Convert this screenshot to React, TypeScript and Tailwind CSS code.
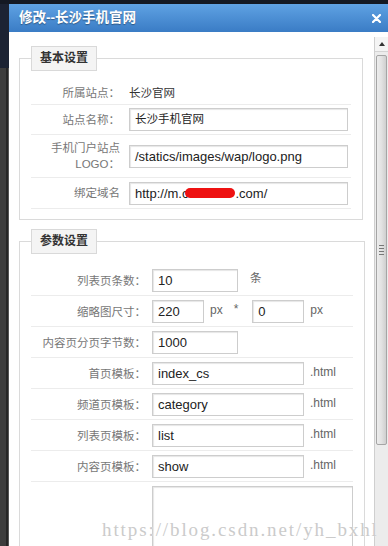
import React from "react";

const font = "font-['Liberation_Sans','Noto_Sans_CJK_SC',sans-serif]";

function Box({ w, children }: { w: string; children?: React.ReactNode }) {
  return (
    <div
      className={`${w} h-[23px] shrink-0 border border-[#cdcdcd] bg-white shadow-[inset_1px_1px_1px_#e6e6e6] pl-[5px] flex items-center text-[13px] text-[#222] leading-none overflow-hidden whitespace-nowrap`}
    >
      {children}
    </div>
  );
}

function Legend({ text }: { text: string }) {
  return (
    <legend className="ml-0 h-[25px] px-[8px] border border-[#d9d9d9] bg-[#f4f4f4] text-[12px] font-bold text-[#333] leading-[23px]">
      {text}
    </legend>
  );
}

function Row2({ label, children }: { label: string; children: React.ReactNode }) {
  return (
    <div className="flex items-center h-[31px] pt-[1px] border-b border-[#ececec]">
      <div className="w-[115px] shrink-0 text-right text-[11.5px] text-[#777] leading-[16px]">{label}</div>
      <div className="ml-[6px] flex items-center">{children}</div>
    </div>
  );
}

function Suffix({ text, cls }: { text: string; cls: string }) {
  return <span className={`${cls} text-[12px] text-[#666] leading-none -mt-[3px]`}>{text}</span>;
}

export default function App() {
  return (
    <div className={`w-[388px] h-[546px] overflow-hidden flex flex-col bg-[#141923] ${font}`}>
      <div className="h-[4px] shrink-0 bg-[#141923]" />
      <div className="flex flex-1 min-h-0">
        {/* left backdrop strip */}
        <div className="w-[9px] shrink-0 flex flex-col">
          <div className="h-[64px] bg-[#1c2333]" />
          <div className="flex-1 flex">
            <div className="w-[6px] bg-[#3d3d3d]" />
            <div className="w-[2px] bg-[#262626]" />
            <div className="w-[1px] bg-[#555]" />
          </div>
        </div>
        {/* dialog */}
        <div className="flex-1 flex flex-col bg-white min-w-0">
          <div className="h-[28px] shrink-0 bg-gradient-to-b from-[#5fa2e3] to-[#3a7cc5] flex items-center justify-between pl-[10px] pr-[7px]">
            <span className="text-white font-bold text-[13.5px] [text-shadow:0_1px_1px_rgba(0,0,0,0.35)]">修改--长沙手机官网</span>
            <svg width="9" height="9" viewBox="0 0 9 9">
              <path d="M1 1L8 8M8 1L1 8" stroke="white" strokeWidth="2.2" strokeLinecap="round" />
            </svg>
          </div>
          <div className="flex flex-1 min-h-0">
            <div className="flex-1 min-w-0 pl-[10px] pr-[11px] pt-[14px] relative">
              {/* 基本设置 */}
              <fieldset className="border border-[#dadada] px-[11px] pt-[4px] pb-[10px]">
                <Legend text="基本设置" />
                <div className="flex items-center h-[30px] pt-[6px] border-b border-[#ececec]">
                  <div className="w-[89px] shrink-0 text-right text-[11.5px] text-[#777] leading-[16px]">所属站点：</div>
                  <div className="ml-[9px] text-[11.5px] text-[#333] leading-[16px]">长沙官网</div>
                </div>
                <div className="flex items-center h-[30px] border-b border-[#ececec]">
                  <div className="w-[89px] shrink-0 text-right text-[11.5px] text-[#777] leading-[16px]">站点名称：</div>
                  <div className="ml-[9px]">
                    <Box w="w-[219px]">
                      <span className="text-[11.5px]">长沙手机官网</span>
                    </Box>
                  </div>
                </div>
                <div className="flex items-center h-[43px] border-b border-[#ececec]">
                  <div className="w-[89px] shrink-0 text-right text-[11.5px] text-[#777] leading-[16px]">
                    手机门户站点
                    <br />
                    LOGO：
                  </div>
                  <div className="ml-[9px]">
                    <Box w="w-[219px]">/statics/images/wap/logo.png</Box>
                  </div>
                </div>
                <div className="flex items-center h-[31px] border-b border-[#ececec]">
                  <div className="w-[89px] shrink-0 text-right text-[11.5px] text-[#777] leading-[16px]">绑定域名</div>
                  <div className="ml-[9px]">
                    <Box w="w-[219px]">
                      <span>http://m.c</span>
                      <span className="inline-block w-[50px] h-[10px] -ml-[3px] rounded-[5px] bg-[#ee1111]" />
                      <span>.com/</span>
                    </Box>
                  </div>
                </div>
              </fieldset>

              {/* 参数设置 */}
              <fieldset className="mt-[9px] border border-[#dadada] px-[11px] pt-[11px] pb-[10px]">
                <Legend text="参数设置" />
                <Row2 label="列表页条数：">
                  <Box w="w-[86px]">10</Box>
                  <span className="ml-[12px] text-[11.5px] text-[#666] -mt-[3px]">条</span>
                </Row2>
                <Row2 label="缩略图尺寸：">
                  <Box w="w-[52px]">220</Box>
                  <Suffix text="px" cls="ml-[6px]" />
                  <span className="ml-[11px] text-[12px] text-[#666] -mt-[6px]">*</span>
                  <span className="ml-[14px]">
                    <Box w="w-[52px]">0</Box>
                  </span>
                  <Suffix text="px" cls="ml-[6px]" />
                </Row2>
                <Row2 label="内容页分页字节数：">
                  <Box w="w-[86px]">1000</Box>
                </Row2>
                <Row2 label="首页模板：">
                  <Box w="w-[152px]">index_cs</Box>
                  <Suffix text=".html" cls="ml-[6px]" />
                </Row2>
                <Row2 label="频道页模板：">
                  <Box w="w-[152px]">category</Box>
                  <Suffix text=".html" cls="ml-[6px]" />
                </Row2>
                <Row2 label="列表页模板：">
                  <Box w="w-[152px]">list</Box>
                  <Suffix text=".html" cls="ml-[6px]" />
                </Row2>
                <Row2 label="内容页模板：">
                  <Box w="w-[152px]">show</Box>
                  <Suffix text=".html" cls="ml-[6px]" />
                </Row2>
                <div className="flex pt-[4px]">
                  <div className="w-[115px] shrink-0" />
                  <div className="ml-[6px] w-[201px] h-[90px] border border-[#cdcdcd] shadow-[inset_1px_1px_1px_#e6e6e6]" />
                </div>
              </fieldset>

              {/* watermark */}
              <div className="absolute left-[93px] top-[484px] font-['Liberation_Serif',serif] text-[19px] tracking-[1.9px] text-[#cbcbcb] [text-shadow:0_0_1px_#fff] whitespace-nowrap pointer-events-none">
                https://blog.csdn.net/yh_bxhl
              </div>
            </div>

            {/* scrollbar */}
            <div className="w-[14px] shrink-0 pt-[5px] flex flex-col">
              <div className="flex-1 flex flex-col border-l border-[#cfcfcf] bg-[#ececec]">
                <div className="h-[15px] flex items-center justify-center bg-[#f4f4f4] border-b border-[#d4d4d4]">
                  <svg width="6" height="4" viewBox="0 0 6 4">
                    <path d="M0 4L3 0L6 4Z" fill="#333" />
                  </svg>
                </div>
                <div className="mt-[3px] mx-[1px] h-[390px] rounded-[2px] border border-[#a5a5a5] bg-gradient-to-r from-[#ededed] via-[#e2e2e2] to-[#cfcfcf] flex items-center justify-center">
                  <div className="flex flex-col gap-[2px]">
                    <div className="w-[5px] h-[1px] bg-[#777]" />
                    <div className="w-[5px] h-[1px] bg-[#777]" />
                    <div className="w-[5px] h-[1px] bg-[#777]" />
                    <div className="w-[5px] h-[1px] bg-[#777]" />
                  </div>
                </div>
              </div>
            </div>
          </div>
        </div>
      </div>
    </div>
  );
}
